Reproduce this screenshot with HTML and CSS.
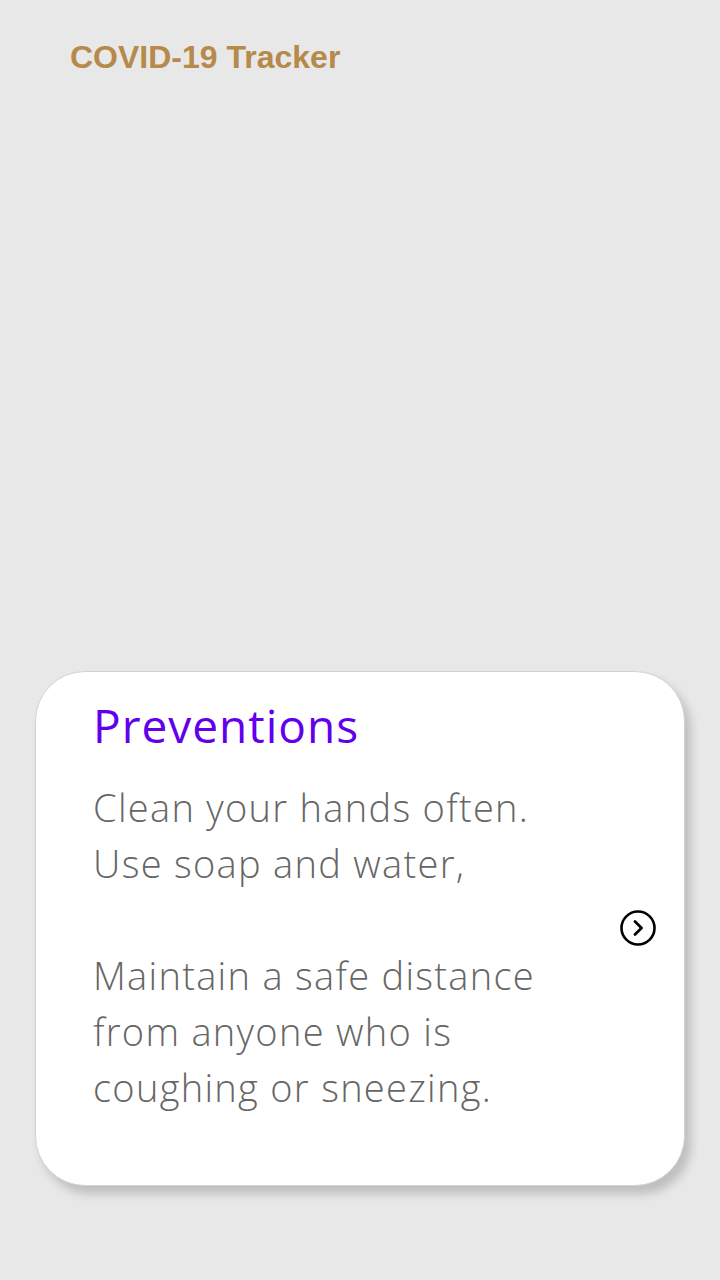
FILE: index.html
```html
<!DOCTYPE html>
<html>
<head>
<meta charset="utf-8">
<link rel="stylesheet" href="styles.css">
</head>
<body>
<div class="page">
  <header class="topbar"><h1 class="brand">COVID-19 Tracker</h1></header>
  <main class="content">
    <section class="card">
      <div class="card-text">
        <h2 class="card-title">Preventions</h2>
        <p class="card-body">Clean your hands often.<br>Use soap and water,<br><br>Maintain a safe distance<br>from anyone who is<br>coughing or sneezing.</p>
      </div>
      <div class="card-action">
        <svg width="38" height="38" viewBox="0 0 38 38" aria-hidden="true">
          <circle cx="19" cy="19" r="16.5" fill="none" stroke="#000" stroke-width="2.6"/>
          <path d="M16 12.5 L22.5 19 L16 25.5" fill="none" stroke="#000" stroke-width="2.8" stroke-linecap="round" stroke-linejoin="round"/>
        </svg>
      </div>
    </section>
  </main>
</div>
</body>
</html>
```
FILE: styles.css
```css
html, body { margin: 0; padding: 0; }
body {
  background: #e8e8e8;
  width: 720px;
  height: 1280px;
  overflow: hidden;
}
.page {
  display: flex;
  flex-direction: column;
  height: 1280px;
}
.topbar {
  padding: 38px 0 0 70px;
  height: 50px;
}
.brand {
  margin: 0;
  font-family: "Liberation Sans", Arial, sans-serif;
  font-weight: 700;
  font-size: 32px;
  line-height: 38px;
  color: #b58a4a;
}
.content {
  padding: 583px 35px 0 35px;
}
.card {
  box-sizing: border-box;
  height: 515px;
  background: #fff;
  border: 1px solid #d2d2d2;
  border-radius: 50px;
  box-shadow: 6px 8px 10px rgba(0,0,0,0.18);
  display: flex;
  align-items: center;
  padding: 0 27px 0 57px;
}
.card-text {
  flex: 1;
  align-self: flex-start;
  padding-top: 23px;
}
.card-title {
  margin: 0;
  font-family: "Open Sans", sans-serif;
  font-weight: 400;
  font-size: 46px;
  line-height: 60px;
  color: #6200ee;
  letter-spacing: 1px;
}
.card-body {
  margin: 24px 0 0 0;
  font-family: "Open Sans", sans-serif;
  font-weight: 300;
  font-size: 38px;
  line-height: 56px;
  color: #666;
  letter-spacing: 1.3px;
}
.card-action {
  display: flex;
  margin-bottom: 2px;
}
```
